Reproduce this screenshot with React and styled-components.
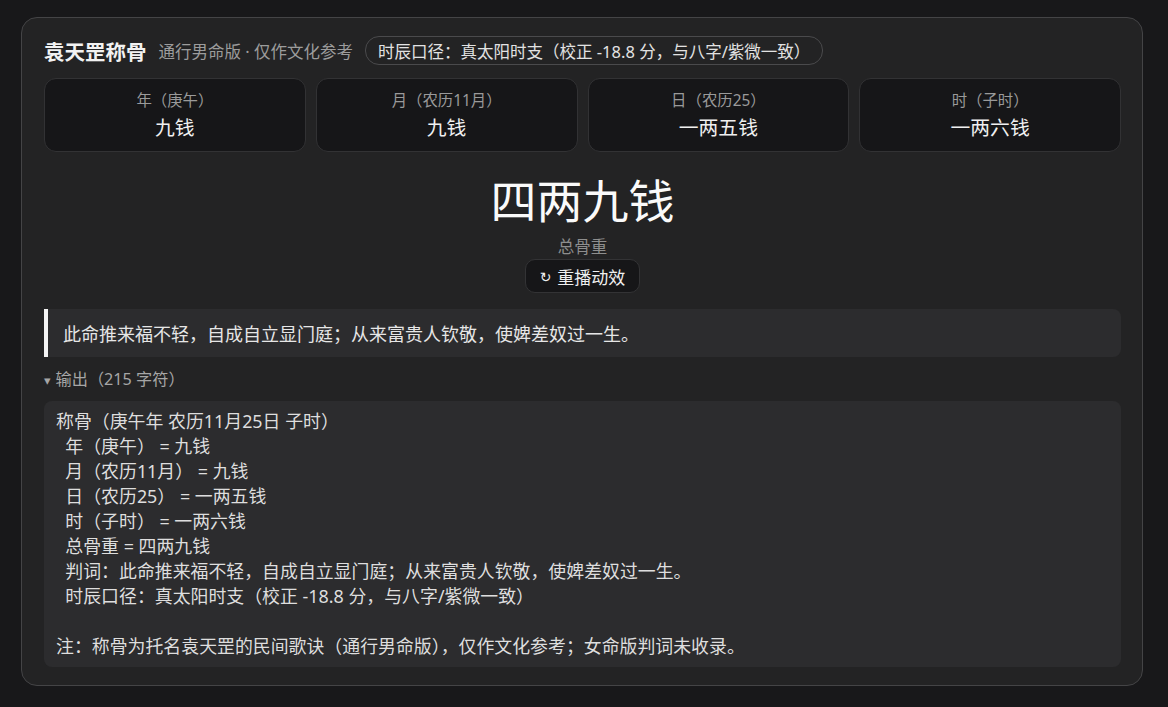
import React from 'react';
import styled, { createGlobalStyle } from 'styled-components';

const GlobalStyle = createGlobalStyle`
  html, body {
    margin: 0;
    padding: 0;
    background: #18181a;
    color: #e6e6e6;
    font-family: "Noto Sans", "Noto Sans CJK SC", sans-serif;
  }
`;

const Page = styled.div`
  padding: 17px 25px 20px 21px;
`;

const Card = styled.section`
  background: #232324;
  border: 1px solid #444446;
  border-radius: 16px;
  padding: 18px 21px 18px 22px;
  display: flex;
  flex-direction: column;
`;

const Header = styled.div`
  display: flex;
  align-items: center;
  gap: 12px;
  height: 29px;
`;

const Title = styled.h1`
  margin: 0;
  font-size: 20.5px;
  font-weight: 700;
  color: #f2f2f2;
`;

const Sub = styled.span`
  font-size: 16.5px;
  color: #9c9c9c;
`;

const Pill = styled.span`
  border: 1px solid #4a4a4c;
  border-radius: 14px;
  padding: 0 12px;
  height: 27px;
  display: inline-flex;
  align-items: center;
  font-size: 16.5px;
  color: #e2e2e2;
`;

const Stats = styled.div`
  display: grid;
  grid-template-columns: repeat(4, 1fr);
  gap: 10px;
  margin-top: 13px;
`;

const Stat = styled.div`
  background: #161618;
  border: 1px solid #323234;
  border-radius: 12px;
  height: 74px;
  box-sizing: border-box;
  display: flex;
  flex-direction: column;
  align-items: center;
  justify-content: center;
  gap: 3px;
`;

const StatLabel = styled.div`
  font-size: 15.4px;
  line-height: 21px;
  color: #9a9a9a;
`;

const StatValue = styled.div`
  font-size: 19.8px;
  line-height: 27px;
  color: #f0f0f0;
`;

const Total = styled.div`
  display: flex;
  flex-direction: column;
  align-items: center;
  margin-top: 20px;
`;

const TotalValue = styled.div`
  font-size: 46px;
  line-height: 56px;
  color: #fafafa;
`;

const TotalLabel = styled.div`
  font-size: 16.5px;
  line-height: 22px;
  color: #8e8e8e;
  margin-top: 8px;
`;

const Replay = styled.button`
  margin-top: 1px;
  height: 34px;
  padding: 0 14px;
  background: #161618;
  border: 1px solid #333335;
  border-radius: 10px;
  color: #f0f0f0;
  font-family: inherit;
  font-size: 17px;
  display: inline-flex;
  align-items: center;
  gap: 6px;
  cursor: pointer;
`;

const Arrow = styled.span`
  font-size: 14px;
  font-family: "DejaVu Sans", sans-serif;
  transform: translateY(1px);
`;

const Quote = styled.blockquote`
  margin: 16px 0 0;
  height: 48px;
  box-sizing: border-box;
  display: flex;
  align-items: center;
  padding: 0 15px;
  background: #2c2c2e;
  border-left: 4px solid #f4f4f4;
  border-radius: 0 8px 8px 0;
  font-size: 18px;
  color: #e6e6e6;
`;

const Details = styled.details`
  margin-top: 11px;
`;

const Summary = styled.summary`
  font-size: 16.2px;
  line-height: 22px;
  color: #a6a6a6;
  cursor: pointer;
  list-style: none;
  &::-webkit-details-marker { display: none; }
`;

const Caret = styled.span`
  font-family: "DejaVu Sans", sans-serif;
  font-size: 13px;
  margin-right: 5px;
`;

const Output = styled.pre`
  margin: 9px 0 0;
  background: #2c2c2e;
  border-radius: 8px;
  padding: 8px 12px 8px;
  font-family: "Noto Sans", "Noto Sans CJK SC", sans-serif;
  font-size: 17.9px;
  line-height: 25px;
  color: #dedede;
  white-space: pre-wrap;
`;

const stats = [
  { label: '年（庚午）', value: '九钱' },
  { label: '月（农历11月）', value: '九钱' },
  { label: '日（农历25）', value: '一两五钱' },
  { label: '时（子时）', value: '一两六钱' },
];

const verdict = '此命推来福不轻，自成自立显门庭；从来富贵人钦敬，使婢差奴过一生。';
const caliber = '真太阳时支（校正 -18.8 分，与八字/紫微一致）';

const outputText = [
  '称骨（庚午年 农历11月25日 子时）',
  ...stats.map((s) => `  ${s.label} = ${s.value}`),
  '  总骨重 = 四两九钱',
  `  判词：${verdict}`,
  `  时辰口径：${caliber}`,
  '',
  '注：称骨为托名袁天罡的民间歌诀（通行男命版），仅作文化参考；女命版判词未收录。',
].join('\n');

export default function App() {
  return (
    <Page>
      <GlobalStyle />
      <Card>
        <Header>
          <Title>袁天罡称骨</Title>
          <Sub>通行男命版 · 仅作文化参考</Sub>
          <Pill>时辰口径：{caliber}</Pill>
        </Header>
        <Stats>
          {stats.map((s) => (
            <Stat key={s.label}>
              <StatLabel>{s.label}</StatLabel>
              <StatValue>{s.value}</StatValue>
            </Stat>
          ))}
        </Stats>
        <Total>
          <TotalValue>四两九钱</TotalValue>
          <TotalLabel>总骨重</TotalLabel>
          <Replay><Arrow>↻</Arrow>重播动效</Replay>
        </Total>
        <Quote>{verdict}</Quote>
        <Details open>
          <Summary><Caret>▾</Caret>输出（215 字符）</Summary>
          <Output>{outputText}</Output>
        </Details>
      </Card>
    </Page>
  );
}
